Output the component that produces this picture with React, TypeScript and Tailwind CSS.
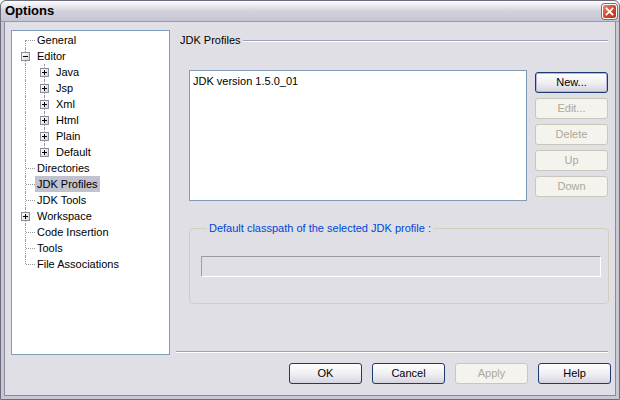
import React from "react";

type V = "full" | "top" | "bottom" | "none";

function Cell({ v, h, box }: { v: V; h?: boolean; box?: "+" | "-" }) {
  return (
    <div className="relative w-[19px] h-[16px] shrink-0">
      {v !== "none" && (
        <div
          className={
            "absolute left-[9px] w-0 border-l border-dotted border-[#9a9a9a] " +
            (v === "full" ? "top-0 h-[16px]" : v === "top" ? "top-0 h-[8px]" : "top-[8px] h-[8px]")
          }
        />
      )}
      {h && <div className="absolute left-[10px] top-[8px] w-[9px] h-0 border-t border-dotted border-[#9a9a9a]" />}
      {box && (
        <div className="absolute left-[5px] top-[4px] w-[9px] h-[9px] border border-[#8c8c9c] bg-gradient-to-br from-white to-[#d4d4dc] flex items-center justify-center">
          <div className="relative w-[5px] h-[5px]">
            <div className="absolute left-0 top-[2px] w-[5px] h-[1px] bg-black" />
            {box === "+" && <div className="absolute left-[2px] top-0 w-[1px] h-[5px] bg-black" />}
          </div>
        </div>
      )}
    </div>
  );
}

function Label({ text, sel }: { text: string; sel?: boolean }) {
  return (
    <div className={"h-[16px] flex items-center px-[2px] whitespace-nowrap " + (sel ? "bg-[#c1c2ce]" : "")}>
      {text}
    </div>
  );
}

function Btn({ label, disabled, def, w = "w-[73px]" }: { label: string; disabled?: boolean; def?: boolean; w?: string }) {
  if (disabled)
    return (
      <div className={w + " h-[21px] rounded-[3px] border border-[#c9c7ba] bg-[#f4f3ee] text-[#aca899] flex items-center justify-center"}>
        {label}
      </div>
    );
  return (
    <div
      className={
        w +
        " h-[21px] rounded-[3px] border border-[#1c3a6e] bg-gradient-to-b from-white via-[#f0f0f4] to-[#d6d5df] text-black flex items-center justify-center " +
        (def ? "shadow-[inset_0_0_0_1px_#b6b4d8]" : "")
      }
    >
      {label}
    </div>
  );
}

export default function App() {
  const font = { fontFamily: '"Liberation Sans", Arial, sans-serif' };
  return (
    <div className="w-[620px] h-[400px] overflow-hidden text-[11px] text-black" style={font}>
      <div className="w-[620px] h-[400px] flex flex-col rounded-t-[6px] border border-[#6c6c7c] bg-[#dfdfe5]">
        {/* title bar */}
        <div className="h-[21px] shrink-0 flex items-center justify-between pl-[4px] pr-[2px] rounded-t-[6px] bg-gradient-to-b from-[#ffffff] via-[#d2d2de] to-[#c4c4d4] border-b border-[#9a9aac]">
          <span className="text-[13px] font-bold text-black" style={{ fontFamily: '"Liberation Sans", Arial, sans-serif' }}>
            Options
          </span>
          <div className="w-[15px] h-[15px] rounded-[3px] border border-white bg-gradient-to-br from-[#e88a74] via-[#d2452a] to-[#b8341c] flex items-center justify-center shadow-[0_0_0_1px_#a06060]">
            <svg width="9" height="9" viewBox="0 0 9 9">
              <path d="M1.5 1.5 L7.5 7.5 M7.5 1.5 L1.5 7.5" stroke="white" strokeWidth="1.8" strokeLinecap="square" />
            </svg>
          </div>
        </div>
        {/* frame inner */}
        <div className="flex-1 flex border-l-[3px] border-r-[3px] border-b-[3px] border-[#c8c8d4] shadow-[inset_1px_0_0_#8a8a9c,inset_-1px_0_0_#8a8a9c,inset_0_-1px_0_#8a8a9c]">
          <div className="flex-1 flex pl-[7px] pt-[8px] pr-[4px]">
            {/* tree */}
            <div className="w-[159px] h-[325px] shrink-0 bg-white border border-[#7f9db9] pt-[1px] pl-[4px]">
              <div className="flex"><Cell v="bottom" h /><Label text="General" /></div>
              <div className="flex"><Cell v="full" box="-" /><Label text="Editor" /></div>
              {["Java", "Jsp", "Xml", "Html", "Plain", "Default"].map((t, i) => (
                <div className="flex" key={t}>
                  <Cell v="full" />
                  <Cell v={i === 5 ? "top" : "full"} box="+" />
                  <Label text={t} />
                </div>
              ))}
              <div className="flex"><Cell v="full" h /><Label text="Directories" /></div>
              <div className="flex"><Cell v="full" h /><Label text="JDK Profiles" sel /></div>
              <div className="flex"><Cell v="full" h /><Label text="JDK Tools" /></div>
              <div className="flex"><Cell v="full" box="+" /><Label text="Workspace" /></div>
              <div className="flex"><Cell v="full" h /><Label text="Code Insertion" /></div>
              <div className="flex"><Cell v="full" h /><Label text="Tools" /></div>
              <div className="flex"><Cell v="top" h /><Label text="File Associations" /></div>
            </div>
            {/* right */}
            <div className="ml-[6px] w-[433px] flex flex-col">
              <div className="h-[21px] flex items-center pl-[4px]">
                <span className="whitespace-nowrap">JDK Profiles</span>
                <div className="flex-1 ml-[2px] h-0 border-t border-[#a0a0b4] shadow-[0_1px_0_#ffffff] mr-[1px]" />
              </div>
              <div className="flex mt-[19px] ml-[13px]">
                <div className="w-[338px] h-[131px] bg-white border border-[#7f9db9] px-[3px] pt-[3px]">
                  <div className="h-[14px] flex items-center">JDK version 1.5.0_01</div>
                </div>
                <div className="ml-[8px] pt-[2px] flex flex-col gap-[5px]">
                  <Btn label="New..." def />
                  <Btn label="Edit..." disabled />
                  <Btn label="Delete" disabled />
                  <Btn label="Up" disabled />
                  <Btn label="Down" disabled />
                </div>
              </div>
              <fieldset className="mt-[19px] ml-[13px] w-[420px] h-[84px] border border-[#d0d0bf] rounded-[4px] pl-[11px] pr-[7px]">
                <legend className="ml-[6px] px-[2px] text-[#0046d5]">Default classpath of the selected JDK profile :</legend>
                <div className="mt-[19px] w-[400px] h-[21px] border-t border-l border-[#9c9ca8] border-b border-r border-b-white border-r-white bg-[#dfdfe5]" />
              </fieldset>
              <div className="mt-[47px] w-[432px] h-0 border-t border-[#a0a0b4] shadow-[0_1px_0_#ffffff]" />
              <div className="mt-[11px] flex gap-[10px] justify-end mr-[-2px]">
                <Btn label="OK" />
                <Btn label="Cancel" />
                <Btn label="Apply" disabled />
                <Btn label="Help" />
              </div>
            </div>
          </div>
        </div>
      </div>
    </div>
  );
}
